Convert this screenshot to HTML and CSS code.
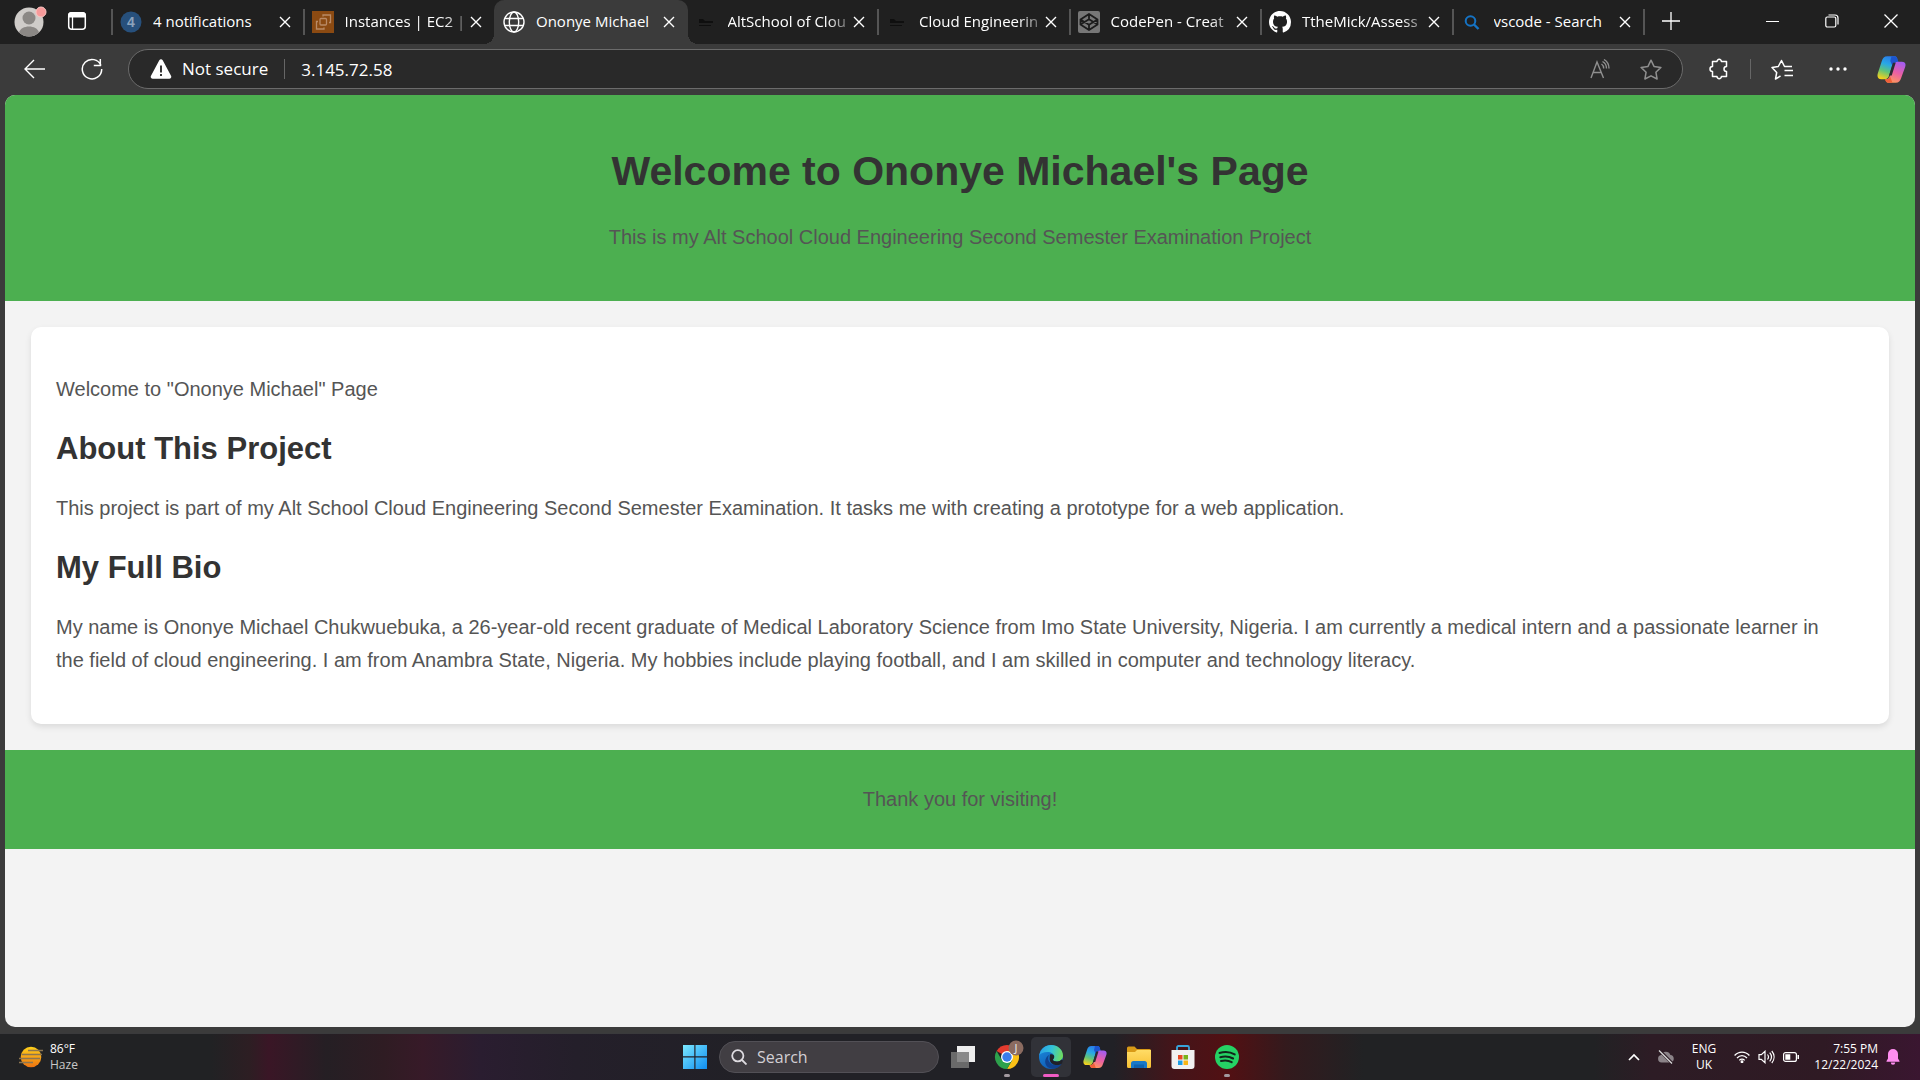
FILE: index.html
```html
<!DOCTYPE html>
<html lang="en">
<head>
<meta charset="utf-8">
<meta name="viewport" content="width=device-width, initial-scale=1">
<title>Ononye Michael</title>
<link rel="stylesheet" href="styles.css">
</head>
<body>
<svg class="defs" aria-hidden="true">
  <defs>
    <linearGradient id="cp-blue" x1="0.6" y1="0" x2="0.3" y2="1"><stop offset="0" stop-color="#2a7be8"/><stop offset="0.35" stop-color="#28a8e6"/><stop offset="0.65" stop-color="#5fc47a"/><stop offset="1" stop-color="#f3d11c"/></linearGradient>
    <linearGradient id="cp-pink" x1="0.7" y1="0" x2="0.3" y2="1"><stop offset="0" stop-color="#a45cf0"/><stop offset="0.5" stop-color="#ea5fa5"/><stop offset="1" stop-color="#ff9a5a"/></linearGradient>
    <linearGradient id="win" x1="0" y1="0" x2="1" y2="1"><stop offset="0" stop-color="#7be8ff"/><stop offset="1" stop-color="#0f8df0"/></linearGradient>
    <linearGradient id="sun" x1="0" y1="0" x2="0" y2="1"><stop offset="0" stop-color="#ffd21a"/><stop offset="1" stop-color="#ee7412"/></linearGradient>
    <linearGradient id="edge-a" x1="0" y1="0.3" x2="1" y2="0.5"><stop offset="0" stop-color="#2a9fe8"/><stop offset="0.5" stop-color="#33c3d8"/><stop offset="1" stop-color="#6fdc5e"/></linearGradient>
    <linearGradient id="edge-b" x1="0" y1="0" x2="0.6" y2="1"><stop offset="0" stop-color="#1b8ee0"/><stop offset="1" stop-color="#1058b0"/></linearGradient>
    <linearGradient id="fold" x1="0" y1="0" x2="0" y2="1"><stop offset="0" stop-color="#ffdc66"/><stop offset="1" stop-color="#f8bf33"/></linearGradient>
    <symbol id="x" viewBox="0 0 12 12"><path d="M1 1l10 10M11 1L1 11" fill="none" stroke="currentColor" stroke-width="1.4"/></symbol>
    <symbol id="alt" viewBox="0 0 22 22"><path d="M4 8h4l2 2h8v2H4zM4 14h12v1H4z" fill="#0f0f0f"/></symbol>
    <symbol id="copilot" viewBox="0 0 24 22">
      <path d="M16.500 1.200C16 .3 15.400 0 14 0H8.500C6 0 4.800 1.500 4 4L.7 14c-.9 3 .2 5 2.800 5h3.300c2 0 2.700-1.200 3.300-3.200l3-10C13.700 4 14.500 3 16 3h1z" fill="url(#cp-blue)"/>
      <path d="M12 0h2.500c1.600 0 2.200 1.200 2.700 3l.8 2.500h-2.500c-1.500 0-2.200 1-2.700 2.500L11 4z" fill="#1c55cf"/>
      <path d="M7.500 20.800c.5.900 1.100 1.200 2.500 1.200h5.500c2.500 0 3.700-1.500 4.500-4l3.300-9c.9-3-.2-4.500-2.800-4.500h-3.300c-2 0-2.700 1.200-3.300 3.200l-3 8C10.300 17.500 9.500 19 8 19H7z" fill="url(#cp-pink)"/>
      <path d="M6.500 19H8c1.500 0 2.300-1 2.800-2.500l2 5.500H9.500c-1.700 0-2.400-1.300-3-3z" fill="#f0603a"/>
      <path d="M13.200 5.500l-3.200 10.500h2.200l3.300-10.500z" fill="#2b2b33"/>
    </symbol>
  </defs>
</svg>

<div class="browser">
  <header class="tabbar">
    <div class="tabbar-start">
      <button class="icon-btn profile" aria-label="Profile">
        <svg width="34" height="32" viewBox="0 0 34 32"><circle cx="15" cy="17" r="14.500" fill="#cfccc9"/><circle cx="15" cy="13" r="6.500" fill="#8b8885"/><path d="M5 27.500c2-8 18-8 20 0a14.500 14.500 0 0 1-20 0z" fill="#8b8885"/><circle cx="27" cy="7" r="5" fill="#f79a9a" stroke="#fbc5c2" stroke-width="1"/></svg>
      </button>
      <button class="icon-btn" aria-label="Tab actions">
        <svg width="20" height="20" viewBox="0 0 20 20"><rect x="1.700" y="1.700" width="16.600" height="16.600" rx="3" fill="none" stroke="#fff" stroke-width="1.500"/><path d="M1 4.500A3.500 3.500 0 0 1 4.500 1h11A3.500 3.500 0 0 1 19 4.500V6.500H1z" fill="#fff"/><path d="M5.500 6v12" stroke="#fff" stroke-width="1.300"/></svg>
      </button>
    </div>
    <nav class="tabs" aria-label="Open tabs">
      <div class="tab">
        <svg class="fav" viewBox="0 0 22 22"><circle cx="11" cy="11" r="10.500" fill="#27507c"/><text x="11" y="16" text-anchor="middle" class="fav-num">4</text></svg>
        <button class="tab-title">4 notifications</button><button class="close" aria-label="Close tab"><svg><use href="#x"/></svg></button>
      </div>
      <div class="tab">
        <svg class="fav" viewBox="0 0 22 22"><path d="M0 0h22v22H0z" fill="#8b4a12"/><g fill="none" stroke="#b98a66" stroke-width="1.300"><rect x="8" y="7.500" width="6.500" height="6.500" rx="1"/><path d="M11 5.500V4h7.500v7.500H17M6 10.500H4.500V18H12v-1.500"/></g></svg>
        <button class="tab-title">Instances | EC2 |</button><button class="close" aria-label="Close tab"><svg><use href="#x"/></svg></button>
      </div>
      <div class="tab active">
        <svg class="fav" viewBox="0 0 22 22" fill="none" stroke="#fff" stroke-width="1.400"><circle cx="11" cy="11" r="10"/><ellipse cx="11" cy="11" rx="4.700" ry="10"/><path d="M2 7.500h18M2 14.500h18"/></svg>
        <button class="tab-title">Ononye Michael</button><button class="close" aria-label="Close tab"><svg><use href="#x"/></svg></button>
      </div>
      <div class="tab">
        <svg class="fav"><use href="#alt"/></svg>
        <button class="tab-title">AltSchool of Clou</button><button class="close" aria-label="Close tab"><svg><use href="#x"/></svg></button>
      </div>
      <div class="tab">
        <svg class="fav"><use href="#alt"/></svg>
        <button class="tab-title">Cloud Engineerin</button><button class="close" aria-label="Close tab"><svg><use href="#x"/></svg></button>
      </div>
      <div class="tab">
        <svg class="fav" viewBox="0 0 22 22"><rect width="22" height="22" rx="2" fill="#777"/><path d="M11 3l8.500 5.500v5L11 19l-8.500-5.500v-5zM11 3v5.500M11 13.500V19M2.500 8.500L11 13.800l8.500-5.300M2.500 13.500L11 8.200l8.500 5.300" fill="none" stroke="#1c1c1c" stroke-width="1.800" stroke-linejoin="round"/></svg>
        <button class="tab-title">CodePen - Creat</button><button class="close" aria-label="Close tab"><svg><use href="#x"/></svg></button>
      </div>
      <div class="tab">
        <svg class="fav" viewBox="0 0 16 16"><path fill="#fff" d="M8 0C3.580 0 0 3.580 0 8c0 3.540 2.290 6.530 5.470 7.590.4.070.55-.17.55-.38 0-.19-.01-.82-.01-1.490-2.010.37-2.530-.49-2.690-.94-.09-.23-.48-.94-.82-1.130-.28-.15-.68-.52-.01-.53.63-.01 1.080.58 1.230.82.72 1.210 1.870.87 2.330.66.07-.52.28-.87.51-1.070-1.780-.2-3.640-.89-3.640-3.950 0-.87.31-1.590.82-2.150-.08-.2-.36-1.020.08-2.120 0 0 .67-.21 2.200.82.64-.18 1.320-.27 2-.27s1.360.09 2 .27c1.530-1.040 2.200-.82 2.200-.82.44 1.100.16 1.920.08 2.120.51.56.82 1.270.82 2.150 0 3.070-1.870 3.750-3.650 3.950.29.25.54.73.54 1.480 0 1.070-.01 1.930-.01 2.200 0 .21.15.46.55.38A8 8 0 0 0 16 8c0-4.420-3.580-8-8-8z"/></svg>
        <button class="tab-title">TtheMick/Assess</button><button class="close" aria-label="Close tab"><svg><use href="#x"/></svg></button>
      </div>
      <div class="tab">
        <svg class="fav" viewBox="0 0 22 22" fill="none" stroke="#1573c4" stroke-width="2"><circle cx="9.500" cy="10" r="4.800"/><path d="M13 13.500l4.500 4.500" stroke-width="2.400"/></svg>
        <button class="tab-title">vscode - Search</button><button class="close" aria-label="Close tab"><svg><use href="#x"/></svg></button>
      </div>
    </nav>
    <div class="tabbar-end">
      <button class="new-tab" aria-label="New tab"><svg width="18" height="18" viewBox="0 0 18 18"><path d="M9 0v18M0 9h18" stroke="#fff" stroke-width="1.300"/></svg></button>
      <div class="window-controls">
        <button aria-label="Minimize"><svg width="14" height="14" viewBox="0 0 14 14"><path d="M0 7.500h13" stroke="#fff"/></svg></button>
        <button aria-label="Restore"><svg width="14" height="14" viewBox="0 0 14 14" fill="none" stroke="#fff" stroke-width="1.200"><rect x=".8" y="3" width="10" height="10" rx="1.500"/><path d="M3.500 1h6.500a3 3 0 0 1 3 3v6.500"/></svg></button>
        <button aria-label="Close"><svg width="14" height="14" viewBox="0 0 14 14"><path d="M.5.500l13 13M13.500.500l-13 13" stroke="#fff" stroke-width="1.300"/></svg></button>
      </div>
    </div>
  </header>

  <div class="toolbar">
    <button class="nav-btn" aria-label="Back"><svg width="22" height="20" viewBox="0 0 22 20" fill="none" stroke="#fff" stroke-width="1.400"><path d="M21 10H1.500M10 1L1 10l9 9"/></svg></button>
    <button class="nav-btn" aria-label="Refresh"><svg width="22" height="22" viewBox="0 0 22 22" fill="none" stroke="#fff" stroke-width="1.500"><path d="M20 7.500A9.700 9.700 0 1 0 20.700 11M19.300 1v6.500h-6.500"/></svg></button>
    <div class="address">
      <button class="secure">
        <svg width="22" height="20" viewBox="0 0 22 20"><path d="M9.300 1.200a2 2 0 0 1 3.400 0l8.300 15.500a2 2 0 0 1-1.700 3H2.700a2 2 0 0 1-1.700-3z" fill="#fff"/><path d="M11 6.500v7M11 15v2" stroke="#222" stroke-width="1.800"/></svg>
        Not secure
      </button>
      <input class="url" type="text" aria-label="Address" value="3.145.72.58">
      <button class="address-btn" aria-label="Read aloud"><svg width="20" height="20" viewBox="0 0 20 20" fill="none" stroke="#8f8f8f" stroke-width="1.400"><path d="M1 19L7 3l6.500 16M3 13.500h8.500M11.500 5c1.500 1 2.200 2.500 2.200 4.500M12.500 2.500c2.800 1.500 4 4 4 7M14 .5c3.500 2 5 5 5 9"/></svg></button>
      <button class="address-btn" aria-label="Add to favorites"><svg width="22" height="21" viewBox="0 0 22 21" fill="none" stroke="#8f8f8f" stroke-width="1.500" stroke-linejoin="round"><path d="M11 1.200l3 6.200 6.900 1-5 4.800 1.200 6.800-6.100-3.200L4.900 20l1.200-6.800-5-4.800 6.900-1z"/></svg></button>
    </div>
    <div class="tools">
      <button class="tool" aria-label="Extensions"><svg width="22" height="22" viewBox="0 0 22 22" fill="none" stroke="#fff" stroke-width="1.500" stroke-linejoin="round"><path d="M4.500 3.500H9a2.200 2.200 0 1 1 4.400 0h5.100V8.500a2.500 2.500 0 1 0 0 5v5h-5.100a2.200 2.200 0 1 1-4.400 0H4.500v-5a2.500 2.500 0 1 1 0-5z"/></svg></button>
      <span class="tool-divider"></span>
      <button class="tool" aria-label="Favorites"><svg width="22" height="21" viewBox="0 0 22 21" fill="none" stroke="#fff" stroke-width="1.500" stroke-linejoin="round"><path d="M9.500 17L4.500 20l1.200-6.500L1 8.500l6.300-1L10.500 1.500l3 6h7.500M13.500 11.500H22M13.500 16.500H22"/></svg></button>
      <button class="tool more" aria-label="Settings and more"><svg width="18" height="6" viewBox="0 0 18 6" fill="#fff"><circle cx="2" cy="3" r="1.700"/><circle cx="9" cy="3" r="1.700"/><circle cx="16" cy="3" r="1.700"/></svg></button>
      <button class="tool copilot" aria-label="Copilot"><svg width="29" height="27"><use href="#copilot"/></svg></button>
    </div>
  </div>

  <div class="viewport">
    <header class="hero">
      <h1>Welcome to Ononye Michael's Page</h1>
      <p>This is my Alt School Cloud Engineering Second Semester Examination Project</p>
    </header>
    <main class="card">
      <p>Welcome to "Ononye Michael" Page</p>
      <h2>About This Project</h2>
      <p>This project is part of my Alt School Cloud Engineering Second Semester Examination. It tasks me with creating a prototype for a web application.</p>
      <h2>My Full Bio</h2>
      <p>My name is Ononye Michael Chukwuebuka, a 26-year-old recent graduate of Medical Laboratory Science from Imo State University, Nigeria. I am currently a medical intern and a passionate learner in<br> the field of cloud engineering. I am from Anambra State, Nigeria. My hobbies include playing football, and I am skilled in computer and technology literacy.</p>
    </main>
    <footer class="thanks"><p>Thank you for visiting!</p></footer>
  </div>
</div>

<div class="taskbar">
  <button class="weather">
    <svg width="26" height="22" viewBox="0 0 26 22"><circle cx="13" cy="11" r="10.300" fill="url(#sun)"/><path d="M10 4.500h15M4 8.500h20M8 12.500h14M1 12.500h9M1 16.500h14" stroke="#8c7650" stroke-width="1.600"/></svg>
    <span class="stack"><span class="temp">86°F</span><span>Haze</span></span>
  </button>
  <div class="dock">
    <button class="app" aria-label="Start"><svg width="24" height="24" viewBox="0 0 24 24" fill="url(#win)"><path d="M0 0h11.300v11.300H0zM12.500 0H24v11.300H12.500zM0 12.500h11.300V24H0zM12.500 12.500H24V24H12.500z"/></svg></button>
    <label class="search">
      <svg width="16" height="16" viewBox="0 0 16 16" fill="none" stroke="#dedbe0" stroke-width="1.800"><circle cx="6.800" cy="6.800" r="5.600"/><path d="M11 11l4.500 4.500"/></svg>
      <input type="text" placeholder="Search" aria-label="Search">
    </label>
    <button class="app" aria-label="Task view"><svg width="24" height="22" viewBox="0 0 24 22"><path d="M6 0h18v16H6z" fill="#eee"/><path d="M0 6h18v16H0z" fill="#777" fill-opacity=".85"/></svg></button>
    <button class="app running" aria-label="Chrome">
      <svg width="34" height="34" viewBox="-4 0 34 34"><g transform="translate(13 17)"><path d="M0 0L-10.400-6A12 12 0 0 1 10.400-6z" fill="#e33b2e"/><path d="M0-6H10.400A12 12 0 0 1 0 12L5.200 3z" fill="#fbc116"/><path d="M5.200 3L0 12A12 12 0 0 1-10.400-6L-5.200 3z" fill="#2da14c"/><circle r="6" fill="#fff"/><circle r="4.700" fill="#3b7ded"/></g><circle cx="22" cy="8" r="7.500" fill="#8b6b60"/><text x="22" y="12" text-anchor="middle" class="badge">J</text></svg>
    </button>
    <button class="app running current" aria-label="Edge">
      <svg width="24" height="24" viewBox="0 0 24 24"><circle cx="12" cy="12" r="12" fill="url(#edge-b)"/><path d="M.2 10.500C1.500 4 6.500 0 12 0c7 0 12 5 12 10.500 0 4-3 6-6 6-2.500 0-4.300-.8-4-2 .9-1 1.200-1.800 1.200-3C15.200 9 12 7 8.500 7 4.500 7 1.500 8.500.2 10.500z" fill="url(#edge-a)"/><path d="M10.500 9.500c-3 3.500-.8 9.500 5 10.500 2.500.4 5-.3 6.500-1.500.5-.3.900.1.600.6C20 23 15 25 10.500 23 5 21 4.500 13 10.500 9.500z" fill="#10428f"/><path d="M11 9.500c2.500-.8 4.400.4 4.200 2.400-.1 1.200-.6 1.700-1.200 2.600-.3 1.200 1.500 2 4 2 2 0 3.500-.7 4.500-2l1.500 1-1.200 3.200c-3 2-11 2.300-12-3.700-.2-1.600-.1-3 .2-5.500z" fill="#202128"/></svg>
    </button>
    <button class="app" aria-label="Copilot"><svg width="24" height="22"><use href="#copilot"/></svg></button>
    <button class="app" aria-label="File Explorer"><svg width="24" height="22" viewBox="0 0 24 22"><path d="M0 2a1.500 1.500 0 0 1 1.500-1.500h6L10 3h12.500A1.500 1.500 0 0 1 24 4.500V12H0z" fill="#d99a17"/><path d="M0 6h8l2-2h14v16.500a1.500 1.500 0 0 1-1.500 1.500h-21A1.500 1.500 0 0 1 0 20.500z" fill="url(#fold)"/><path d="M4 22v-4.500A2.500 2.500 0 0 1 6.500 15h11a2.500 2.500 0 0 1 2.500 2.500V22h-3v-2.500H7V22z" fill="#1878c8"/><path d="M7 22v-3.500h10V22z" fill="#0f62ae"/></svg></button>
    <button class="app" aria-label="Microsoft Store"><svg width="24" height="24" viewBox="0 0 24 24"><path d="M6 6V2.500A1.500 1.500 0 0 1 7.500 1h9A1.500 1.500 0 0 1 18 2.500V6" fill="none" stroke="#38a5dc" stroke-width="1.800"/><path d="M.5 5h23v16a3 3 0 0 1-3 3h-17a3 3 0 0 1-3-3z" fill="#f1f1f1"/><path d="M7 10h4.500v4.500H7z" fill="#e84a25"/><path d="M12.500 10H17v4.500h-4.500z" fill="#78b31b"/><path d="M7 15.500h4.500V20H7z" fill="#1c9ee6"/><path d="M12.500 15.500H17V20h-4.500z" fill="#f9b513"/></svg></button>
    <button class="app running" aria-label="Spotify"><svg width="24" height="24" viewBox="0 0 24 24"><circle cx="12" cy="12" r="12" fill="#25d264"/><path d="M4.500 8c5-1.500 11-1 15.200 1.400M5.300 12.200c4.500-1.300 9-.8 12.800 1.300M6 16c3.700-1 7.500-.7 10.700 1.200" fill="none" stroke="#12251a" stroke-width="2" stroke-linecap="round"/></svg></button>
  </div>
  <div class="tray">
    <button class="tray-btn" aria-label="Show hidden icons"><svg width="12" height="8" viewBox="0 0 12 8"><path d="M1 7l5-5 5 5" fill="none" stroke="#fff" stroke-width="1.700"/></svg></button>
    <button class="tray-btn" aria-label="OneDrive"><svg width="18" height="14" viewBox="0 0 18 14"><path d="M4.500 12.500a3.800 3.800 0 0 1-.4-7.500 5 5 0 0 1 9.300 0 3.800 3.800 0 0 1 .3 7.500z" fill="#8b8388"/><path d="M2.500.5l13 13" stroke="#2c1b25" stroke-width="3"/><path d="M2 .5l13 13" stroke="#ddd" stroke-width="1.300"/></svg></button>
    <button class="stack lang"><span>ENG</span><span>UK</span></button>
    <button class="status" aria-label="Network, volume and battery">
      <svg width="16" height="12" viewBox="0 0 16 12" fill="none" stroke="#fff" stroke-width="1.300"><path d="M.6 4.500c4.200-4.600 10.600-4.600 14.800 0M3 7c3-3.200 7-3.200 10 0M5.300 9.400c1.600-1.700 3.800-1.700 5.400 0"/><circle cx="8" cy="10.800" r=".8" fill="#fff"/></svg>
      <svg width="17" height="14" viewBox="0 0 17 14" fill="none" stroke="#fff" stroke-width="1.200"><path d="M1 4.700h2.300L7 1.300v11.400L3.300 9.300H1zM9.500 4.500c1.200 1.500 1.200 3.500 0 5M11.700 2.700c2.200 2.600 2.200 6 0 8.600M13.800 1c3 3.600 3 8.400 0 12"/></svg>
      <svg width="16" height="10" viewBox="0 0 16 10"><rect x=".6" y=".6" width="12.800" height="8.800" rx="2" fill="none" stroke="#fff" stroke-width="1.200"/><path d="M2.300 2.300h5v5.400h-5zM14.500 3h1.500v4h-1.500z" fill="#fff"/></svg>
    </button>
    <button class="stack clock"><span>7:55 PM</span><span>12/22/2024</span></button>
    <button class="bell" aria-label="Notifications"><svg width="14" height="16" viewBox="0 0 14 16" fill="#ff8df0"><path d="M7 0a5 5 0 0 1 5 5v4.500l1.500 2.500v.7H.5V12L2 9.500V5a5 5 0 0 1 5-5zM4.800 13.600h4.400a2.200 2.200 0 0 1-4.400 0z"/></svg></button>
  </div>
</div>
</body>
</html>
```
FILE: styles.css
```css
* { box-sizing: border-box; }

body {
  margin: 0;
  min-height: 100vh;
  display: flex;
  flex-direction: column;
  background: #3b3b3b;
  color: #fff;
  font-family: "Open Sans", "Noto Sans", sans-serif;
}

button, input {
  margin: 0;
  padding: 0;
  border: 0;
  background: none;
  color: inherit;
  font: inherit;
}

button {
  display: flex;
  align-items: center;
  justify-content: center;
}

svg { display: block; flex: none; }

.defs { position: absolute; width: 0; height: 0; }

.browser {
  flex: 1;
  display: flex;
  flex-direction: column;
}

/* Tab strip */
.tabbar {
  display: flex;
  height: 44px;
  background: #202020;
}

.tabbar-start {
  flex: 0 0 111px;
  display: flex;
  align-items: center;
  gap: 19px;
  padding: 0 0 2px 14px;
}

.tabs {
  flex: 1;
  min-width: 0;
  display: grid;
  grid-template-columns: repeat(8, minmax(0, 1fr));
}

.tab {
  display: flex;
  align-items: center;
  padding: 0 12px 0 7px;
  margin: 9px 0 9px;
  border-left: 2px solid #555;
}

.tab.active {
  position: relative;
  margin: 0 -2px 0 0;
  padding-right: 13px;
  border-color: #3b3b3b;
  border-radius: 10px 10px 0 0;
  background: #3b3b3b;
}

/* Concave corners where the active tab meets the toolbar */
.active::before, .active::after {
  content: "";
  position: absolute;
  bottom: 0;
  width: 10px;
  height: 10px;
}

.active::before {
  right: 100%;
  margin-right: 2px;
  background: radial-gradient(circle at 0 0, transparent 10px, #3b3b3b 10px);
}

.active::after {
  left: 100%;
  background: radial-gradient(circle at 100% 0, transparent 10px, #3b3b3b 10px);
}

.active + .tab { border-color: transparent; }

.fav { width: 22px; height: 22px; }

.fav-num {
  font: bold 14px "Liberation Sans", sans-serif;
  fill: #8ba3bc;
}

.tab-title {
  flex: 1;
  min-width: 0;
  margin-left: 11px;
  justify-content: flex-start;
  overflow: hidden;
  white-space: nowrap;
  font-size: 15px;
  line-height: 20px;
  padding-bottom: 2px;
  mask-image: linear-gradient(to right, #000 80%, transparent 104%);
}

.active .tab-title, .tab:first-child .tab-title, .tab:last-child .tab-title { mask-image: none; }

.close { margin-left: 1px; }
.close svg { width: 12px; height: 12px; }

.tabbar-end {
  flex: 0 0 277px;
  display: flex;
  justify-content: space-between;
  align-items: center;
}

.tabbar-end button { height: 42px; padding-bottom: 2px; }

.new-tab {
  width: 56px;
  position: relative;
}

.new-tab::before {
  content: "";
  position: absolute;
  left: 0;
  top: 8px;
  width: 2px;
  height: 26px;
  background: #555;
}

.window-controls { display: flex; }
.window-controls button { width: 59px; }

/* Toolbar */
.toolbar {
  display: flex;
  align-items: center;
  height: 51px;
  padding: 0 0 1px 6px;
}

.nav-btn { width: 57px; height: 40px; }

.address {
  flex: 1;
  min-width: 0;
  display: flex;
  align-items: center;
  height: 40px;
  margin-left: 8px;
  padding: 0 20px 0 21px;
  border: 1px solid #6b6b6b;
  border-radius: 20px;
  background: #292929;
  font-size: 17px;
}

.secure {
  gap: 10px;
  padding-right: 16px;
  border-right: 1px solid #666;
  line-height: 20px;
}

.url { flex: 1; min-width: 0; padding-left: 16px; }

.address-btn { width: 22px; margin-left: 29px; }

.tools {
  flex: 0 0 237px;
  display: flex;
  align-items: center;
}

.tool { width: 62px; height: 40px; }
.tool:first-child { width: 72px; }
.tool-divider { width: 1px; height: 20px; margin: 0 0 0 -5px; background: #666; }
.tool.more { width: 50px; }
.tool.copilot { width: 57px; }

/* Web page */
.viewport {
  flex: 1;
  margin: 0 5px 6px;
  border-radius: 10px;
  overflow: hidden;
  background: #f3f3f3;
  color: #555;
  font: 20px/33px "Liberation Sans", Arial, sans-serif;
}

.viewport p { margin: 21px 0; }

.viewport h1, .viewport h2 { color: #333; }

.hero {
  padding: 26px;
  display: flow-root;
  background: #4caf50;
  text-align: center;
}

.hero h1 { margin: 28px 0; font-size: 41px; line-height: 44px; }

.card {
  display: flow-root;
  margin: 26px;
  padding: 25px 25px 26px;
  border-radius: 10px;
  background: #fff;
  box-shadow: 0 3px 6px rgba(0, 0, 0, 0.1);
}

.card h2 { margin: 26px 0; font-size: 31px; line-height: 34px; }

.thanks {
  display: flow-root;
  padding: 12px;
  background: #4caf50;
  text-align: center;
}

/* Taskbar */
.taskbar {
  display: grid;
  grid-template-columns: 1fr auto 1fr;
  align-items: center;
  height: 47px;
  background: linear-gradient(to right, #212224 0, #212224 11%, #2d1e23 13%, #3a1626 14%, #251f24 17%, #2f1c23 20%, #371a28 22%, #2a1d30 25%, #241f2a 30%, #212126 40%, #212126 58%, #43151a 61%, #521013 64%, #331a1d 67%, #212224 71%, #212224 83%, #2d1c25 86%, #2f1a24 95%, #3a1630 100%);
  border-top: 1px solid #3a3a3c;
  font-size: 12px;
}

.stack {
  display: flex;
  flex-direction: column;
  align-items: center;
  line-height: 16px;
}

.weather { justify-self: start; gap: 6px; padding-left: 18px; }
.weather .stack { align-items: flex-start; color: #c8c8c8; }
.weather .temp { color: #fff; }

.dock { display: flex; align-items: center; padding-left: 2px; }

.app { position: relative; width: 44px; height: 40px; }

.current::before {
  content: "";
  position: absolute;
  z-index: -1;
  inset: 0 2px;
  border-radius: 5px;
  background: #313238;
}

.current { z-index: 0; }

.running::after {
  content: "";
  position: absolute;
  bottom: 0;
  left: 19px;
  width: 6px;
  height: 3px;
  border-radius: 2px;
  background: #a39aa0;
}

.current::after { left: 14px; width: 16px; background: #f05cc4; }

.badge { font: 11px "Open Sans", sans-serif; fill: #eee; }

.search {
  display: flex;
  align-items: center;
  gap: 10px;
  width: 220px;
  height: 32px;
  margin: 0 2px;
  padding: 0 11px;
  border: 1px solid #525056;
  border-radius: 16px;
  background: #413e43;
}

.search input { flex: 1; min-width: 0; font-size: 16px; }
.search input::placeholder { color: #d2cfd4; opacity: 1; }

.tray {
  justify-self: end;
  display: flex;
  align-items: center;
  padding-right: 20px;
}

.tray-btn { width: 32px; height: 40px; }
.lang { width: 44px; }
.status { gap: 8px; margin-left: 8px; }
.clock { width: 79px; align-items: flex-end; }
.bell { margin-left: 8px; }
```
